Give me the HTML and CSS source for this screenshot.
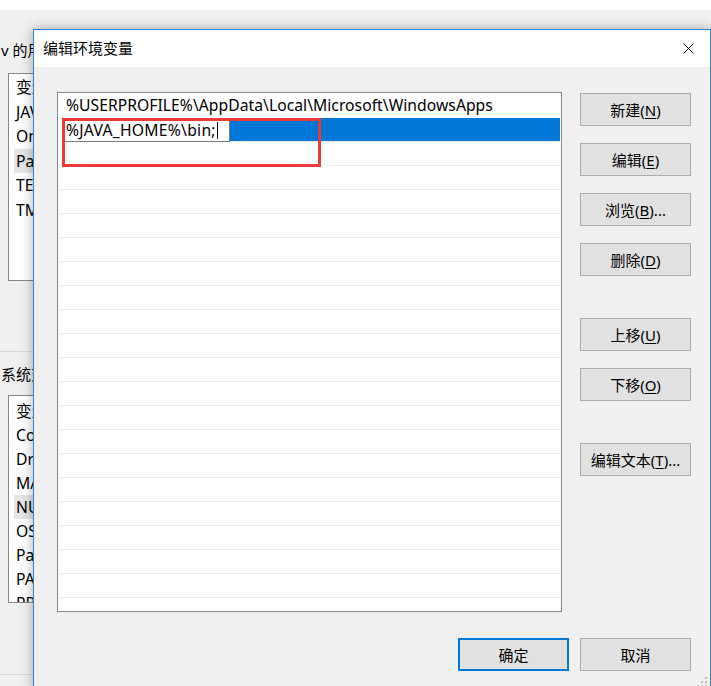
FILE: index.html
```html
<!DOCTYPE html>
<html lang="zh-CN">
<head>
<meta charset="utf-8">
<title>编辑环境变量</title>
<link rel="stylesheet" href="styles.css">
</head>
<body>
<div class="desktop">
  <div class="bg-window">
    <div class="bg-strip"></div>
    <div class="bg-body">
      <div class="bg-label">v 的用户变量</div>
      <div class="bg-list list-user">
        <div class="bg-row">变量</div>
        <div class="bg-row">JAVA_HOME</div>
        <div class="bg-row">OneDrive</div>
        <div class="bg-row selected">Path</div>
        <div class="bg-row">TEMP</div>
        <div class="bg-row">TMP</div>
      </div>
      <div class="bg-sep sep-1"></div>
      <div class="bg-label label-sys">系统变量</div>
      <div class="bg-list list-sys">
        <div class="bg-row">变量</div>
        <div class="bg-row">ComSpec</div>
        <div class="bg-row">DriverData</div>
        <div class="bg-row">MAVEN_HOME</div>
        <div class="bg-row selected">NUMBER_OF_PROCESSORS</div>
        <div class="bg-row">OS</div>
        <div class="bg-row">Path</div>
        <div class="bg-row">PATHEXT</div>
        <div class="bg-row">PROCESSOR_ARCHITECTURE</div>
      </div>
      <div class="bg-sep sep-2"></div>
    </div>
  </div>

  <div class="dialog">
    <div class="titlebar">
      <span class="title">编辑环境变量</span>
      <svg class="close" width="11" height="11" viewBox="0 0 11 11" aria-label="关闭">
        <path d="M0.5 0.5 L10.5 10.5 M10.5 0.5 L0.5 10.5" stroke="#000" stroke-width="1" fill="none"/>
      </svg>
    </div>
    <div class="dlg-body">
      <div class="main-row">
        <div class="listbox">
          <div class="row first">%USERPROFILE%\AppData\Local\Microsoft\WindowsApps</div>
          <div class="row editing">
            <div class="editbox">%JAVA_HOME%\bin;<span class="caret"></span></div>
            <div class="sel-fill"></div>
          </div>
          <div class="row"></div>
          <div class="row"></div>
          <div class="row"></div>
          <div class="row"></div>
          <div class="row"></div>
          <div class="row"></div>
          <div class="row"></div>
          <div class="row"></div>
          <div class="row"></div>
          <div class="row"></div>
          <div class="row"></div>
          <div class="row"></div>
          <div class="row"></div>
          <div class="row"></div>
          <div class="row"></div>
          <div class="row"></div>
          <div class="row"></div>
          <div class="row"></div>
          <div class="row"></div>
          <div class="row"></div>
          <div class="annot"></div>
        </div>
        <div class="side-buttons">
          <button class="btn">新建(<u>N</u>)</button>
          <button class="btn">编辑(<u>E</u>)</button>
          <button class="btn">浏览(<u>B</u>)...</button>
          <button class="btn">删除(<u>D</u>)</button>
          <button class="btn spaced">上移(<u>U</u>)</button>
          <button class="btn">下移(<u>O</u>)</button>
          <button class="btn spaced">编辑文本(<u>T</u>)...</button>
        </div>
      </div>
      <div class="footer">
        <button class="btn default">确定</button>
        <button class="btn">取消</button>
      </div>
    </div>
    <svg class="grip" width="12" height="12" viewBox="0 0 12 12">
      <rect x="9" y="1" width="2" height="2" fill="#b8b8b8"/>
      <rect x="5" y="5" width="2" height="2" fill="#b8b8b8"/>
      <rect x="9" y="5" width="2" height="2" fill="#b8b8b8"/>
      <rect x="1" y="9" width="2" height="2" fill="#b8b8b8"/>
      <rect x="5" y="9" width="2" height="2" fill="#b8b8b8"/>
      <rect x="9" y="9" width="2" height="2" fill="#b8b8b8"/>
    </svg>
  </div>
</div>
</body>
</html>
```
FILE: styles.css
```css
html, body {
  margin: 0;
  padding: 0;
  height: 686px;
  overflow: hidden;
}
body {
  background: #f0f0f0;
  font-family: "Noto Sans", "Noto Sans CJK SC", sans-serif;
  font-size: 15px;
  color: #000;
}
.desktop {
  position: relative;
  width: 711px;
  height: 686px;
  overflow: hidden;
}

/* background window */
.bg-strip {
  height: 10px;
  background: #fff;
}
.bg-body {
  display: flex;
  flex-direction: column;
  padding-top: 30px;
}
.bg-label {
  height: 20px;
  line-height: 20px;
  padding-left: 1px;
  white-space: nowrap;
}
.bg-list {
  margin-left: 8px;
  width: 600px;
  height: 208px;
  box-sizing: border-box;
  border: 1px solid #828790;
  background: #fff;
  overflow: hidden;
  font-size: 15.7px;
}
.list-user {
  margin-top: 13px;
  padding-top: 1px;
}
.list-user .bg-row {
  height: 24.6px;
  line-height: 24.6px;
}
.list-sys {
  margin-top: 11px;
  padding-top: 3px;
}
.list-sys .bg-row {
  height: 24px;
  line-height: 24px;
}
.bg-row {
  margin-left: 5px;
  padding-left: 2px;
  white-space: nowrap;
}
.bg-row.selected {
  background: #e5e5e5;
}
.bg-sep {
  height: 1px;
  background: #d9d9d9;
}
.sep-1 { margin-top: 70px; }
.sep-2 { margin-top: 71px; }
.label-sys { margin-top: 12px; }

/* dialog */
.dialog {
  position: absolute;
  left: 33px;
  top: 29px;
  width: 678px;
  height: 662px;
  box-sizing: border-box;
  border: 1px solid #2b86d9;
  background: #f0f0f0;
  box-shadow: 0 0 12px rgba(0, 0, 0, 0.32);
  display: flex;
  flex-direction: column;
}
.titlebar {
  height: 37px;
  flex: none;
  background: #fff;
  display: flex;
  align-items: center;
  padding: 0 16px 0 9px;
}
.title {
  flex: 1;
  line-height: 20px;
  margin-top: -1px;
}
.close {
  display: block;
}
.dlg-body {
  padding: 25px 19px 0 23px;
}
.main-row {
  display: flex;
  gap: 18px;
}
.listbox {
  position: relative;
  width: 505px;
  height: 520px;
  flex: none;
  box-sizing: border-box;
  border: 1px solid #828790;
  background: #fff;
  padding-top: 1px;
  overflow: hidden;
  font-size: 15.7px;
}
.row {
  height: 24px;
  box-sizing: border-box;
  margin: 0 1px;
  border-bottom: 1px solid #ececec;
  padding-left: 7px;
  line-height: 23px;
  white-space: nowrap;
}
.row.first {
  border-bottom-color: transparent;
  letter-spacing: 0.03px;
}
.row.editing {
  display: flex;
  align-items: flex-start;
  padding-left: 3px;
}
.editbox {
  width: 168px;
  height: 24px;
  flex: none;
  box-sizing: border-box;
  border: 1px solid #7a7a7a;
  background: #fff;
  padding-left: 3px;
  display: flex;
  align-items: center;
  line-height: 22px;
  letter-spacing: 0.25px;
  position: relative;
  z-index: 1;
}
.caret {
  display: inline-block;
  width: 1px;
  height: 17px;
  background: #000;
  margin-left: 1px;
}
.sel-fill {
  flex: 1;
  height: 23px;
  background: #0078d7;
}
.annot {
  position: absolute;
  left: 4px;
  top: 25px;
  width: 259px;
  height: 49px;
  box-sizing: border-box;
  border: 3px solid #ec3a3a;
  z-index: 2;
}
.side-buttons {
  display: flex;
  flex-direction: column;
  gap: 17px;
  padding-top: 1px;
}
.btn {
  width: 111px;
  height: 33px;
  box-sizing: border-box;
  border: 1px solid #adadad;
  background: #e1e1e1;
  font: inherit;
  color: #000;
  padding: 0;
  margin: 0;
  line-height: 20px;
  white-space: nowrap;
}
.btn u {
  text-decoration: underline;
  text-underline-offset: 2px;
}
.btn.spaced {
  margin-top: 25px;
}
.btn.default {
  border: 2px solid #0078d7;
}
.footer {
  display: flex;
  justify-content: flex-end;
  gap: 11px;
  margin-top: 26px;
}
.grip {
  position: absolute;
  right: 2px;
  bottom: 2px;
}
```
